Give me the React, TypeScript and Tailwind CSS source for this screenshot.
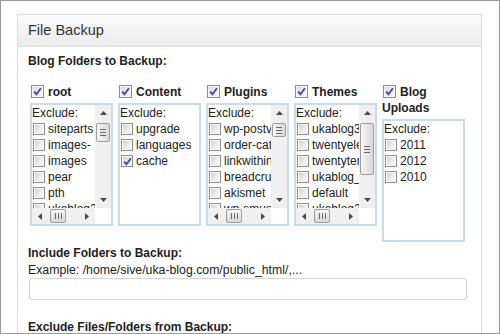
import React from "react";
import clsx from "clsx";

type Item = { name: string; checked?: boolean };

const folders: {
  label: string;
  items: Item[];
  scroll?: { v: number };
}[] = [
  {
    label: "root",
    items: [
      { name: "siteparts" },
      { name: "images-" },
      { name: "images" },
      { name: "pear" },
      { name: "pth" },
      { name: "ukablog2" },
    ],
    scroll: { v: 19 },
  },
  {
    label: "Content",
    items: [{ name: "upgrade" }, { name: "languages" }, { name: "cache", checked: true }],
  },
  {
    label: "Plugins",
    items: [
      { name: "wp-postviews" },
      { name: "order-categories" },
      { name: "linkwithin" },
      { name: "breadcrumb-navxt" },
      { name: "akismet" },
      { name: "wp-smushit" },
    ],
    scroll: { v: 14 },
  },
  {
    label: "Themes",
    items: [
      { name: "ukablog3" },
      { name: "twentyeleven" },
      { name: "twentyten" },
      { name: "ukablog_old" },
      { name: "default" },
      { name: "ukablog2" },
    ],
    scroll: { v: 52 },
  },
  {
    label: "Blog Uploads",
    items: [{ name: "2011" }, { name: "2012" }, { name: "2010" }],
  },
];

function Cb({ checked = false, className = "" }: { checked?: boolean; className?: string }) {
  return (
    <span
      className={clsx(
        "inline-flex items-center justify-center shrink-0 border border-[#8e8f8f] bg-linear-to-br from-[#cfd0d2] via-[#ebebeb] to-[#fbfbfb] shadow-[inset_0_0_0_1px_#f6f6f6]",
        className
      )}
    >
      {checked && (
        <svg width="9" height="9" viewBox="0 0 9 9">
          <path d="M1.2 4.6 L3.5 7.2 L7.9 1.2" fill="none" stroke="#3c4fa6" strokeWidth="1.9" />
        </svg>
      )}
    </span>
  );
}

function Arrow({ dir }: { dir: "up" | "down" | "left" | "right" }) {
  const d = {
    up: "M0 4 L3.5 0 L7 4 Z",
    down: "M0 0 L7 0 L3.5 4 Z",
    left: "M4 0 L4 7 L0 3.5 Z",
    right: "M0 0 L4 3.5 L0 7 Z",
  }[dir];
  const vert = dir === "up" || dir === "down";
  return (
    <svg width={vert ? 7 : 4} height={vert ? 4 : 7} viewBox={vert ? "0 0 7 4" : "0 0 4 7"}>
      <path d={d} fill="#4a4a4a" />
    </svg>
  );
}

function VScroll({ thumb }: { thumb: number }) {
  return (
    <div className="w-[16px] shrink-0 flex flex-col bg-[#f0f0f0]">
      <div className="h-[16px] flex items-center justify-center">
        <Arrow dir="up" />
      </div>
      <div
        className="mt-[2px] mx-[1px] rounded-[2px] border border-[#9e9e9e] bg-linear-to-r from-[#f6f6f6] to-[#d8d8d8] flex flex-col items-center justify-center gap-[2px]"
        style={{ height: thumb }}
      >
        <div className="w-[6px] h-[1px] bg-[#6b6b6b]" />
        <div className="w-[6px] h-[1px] bg-[#6b6b6b]" />
        <div className="w-[6px] h-[1px] bg-[#6b6b6b]" />
      </div>
      <div className="flex-1" />
      <div className="h-[16px] flex items-center justify-center">
        <Arrow dir="down" />
      </div>
    </div>
  );
}

function HScroll() {
  return (
    <div className="flex h-[16px] shrink-0">
      <div className="flex-1 flex bg-[#f0f0f0]">
        <div className="w-[16px] flex items-center justify-center">
          <Arrow dir="left" />
        </div>
        <div className="ml-[2px] my-[1px] w-[16px] rounded-[2px] border border-[#9e9e9e] bg-linear-to-b from-[#f6f6f6] to-[#d8d8d8] flex items-center justify-center gap-[2px]">
          <div className="h-[6px] w-[1px] bg-[#6b6b6b]" />
          <div className="h-[6px] w-[1px] bg-[#6b6b6b]" />
          <div className="h-[6px] w-[1px] bg-[#6b6b6b]" />
        </div>
        <div className="flex-1" />
        <div className="w-[16px] flex items-center justify-center">
          <Arrow dir="right" />
        </div>
      </div>
      <div className="w-[16px] bg-white" />
    </div>
  );
}

function FolderColumn({ label, items, scroll }: (typeof folders)[number]) {
  return (
    <div className="w-[83px] shrink-0">
      <div className="font-bold text-[12px] leading-[16px] text-[#222]">
        <Cb checked className="w-[13px] h-[13px] align-middle ml-[1px] mr-[4px] relative top-[-1px]" />
        {label}
      </div>
      <div className="mt-[3px] h-[123px] border-2 border-[#c9dcee] bg-white flex flex-col">
        <div className="flex flex-1 min-h-0">
          <div className="flex-1 overflow-hidden text-[12px] leading-[16px] text-[#222]">
            <div className="whitespace-nowrap">Exclude:</div>
            {items.map((it) => (
              <div key={it.name} className="flex items-center h-[16px] pl-[1px] whitespace-nowrap">
                <Cb checked={it.checked} className="w-[12px] h-[12px]" />
                <span className="ml-[3px]">{it.name}</span>
              </div>
            ))}
          </div>
          {scroll && <VScroll thumb={scroll.v} />}
        </div>
        {scroll && <HScroll />}
      </div>
    </div>
  );
}

export default function App() {
  return (
    <div className="w-[500px] h-[334px] border border-[#999] bg-white overflow-hidden font-['Liberation_Sans',Arial,sans-serif] text-[#222]">
      <div className="ml-[16px] mt-[13px] w-[465px] h-[340px] border border-[#dcdcdc] bg-white">
        <div className="h-[32px] border-b border-[#dcdcdc] bg-linear-to-b from-[#fafafa] to-[#ececec] flex items-center pl-[10px]">
          <span className="text-[14.5px] text-[#333]">File Backup</span>
        </div>
        <div className="pl-[10px] pt-[6px]">
          <div className="font-bold text-[12px] leading-[16px] text-[#222]">Blog Folders to Backup:</div>
          <div className="mt-[15px] ml-[2px] flex gap-[5px] items-start">
            {folders.map((f) => (
              <FolderColumn key={f.label} {...f} />
            ))}
          </div>
          <div className="mt-[3px] font-bold text-[12px] leading-[16px] text-[#222]">Include Folders to Backup:</div>
          <div className="mt-[1px] text-[12.3px] leading-[16px] text-[#222]">
            Example: /home/sive/uka-blog.com/public_html/,...
          </div>
          <input
            type="text"
            className="block ml-[1px] w-[438px] h-[22px] rounded-[3px] border border-[#d6d6d6] bg-white outline-none"
          />
          <div className="mt-[19px] font-bold text-[12px] leading-[16px] text-[#222]">
            Exclude Files/Folders from Backup:
          </div>
        </div>
      </div>
    </div>
  );
}
